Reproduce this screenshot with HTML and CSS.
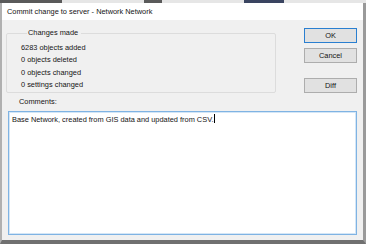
FILE: index.html
```html
<!DOCTYPE html>
<html lang="en">
<head>
  <title>Commit change to server - Network Network</title>
  <meta charset="utf-8">
  <link rel="stylesheet" href="styles.css">
</head>
<body>
  <div class="backdrop">
    <span class="backdrop-dark" style="width: 62px"></span>
    <span class="backdrop-light" style="width: 136px"></span>
    <span class="backdrop-dark" style="width: 18px"></span>
    <span class="backdrop-light" style="width: 14px"></span>
    <span class="backdrop-navy" style="width: 40px"></span>
    <span class="backdrop-light"></span>
  </div>
  <div class="window">
    <div class="titlebar">Commit change to server - Network Network</div>
    <div class="client">
      <div class="top-row">
        <fieldset class="changes">
          <legend class="changes-title">Changes made</legend>
          <div class="change">6283 objects added</div>
          <div class="change">0 objects deleted</div>
          <div class="change">0 objects changed</div>
          <div class="change">0 settings changed</div>
        </fieldset>
        <div class="buttons">
          <button class="button button-default" type="button">OK</button>
          <button class="button" type="button">Cancel</button>
          <button class="button button-diff" type="button">Diff</button>
        </div>
      </div>
      <div class="comments-title">Comments:</div>
      <div class="comments">Base Network, created from GIS data and updated from CSV.<span class="caret"></span></div>
    </div>
  </div>
</body>
</html>
```

FILE: styles.css
```css
*, *::before, *::after {
  margin: 0;
  box-sizing: border-box;
}

body {
  width: 366px;
  height: 244px;
  overflow: hidden;
  background-color: #f0f0f0;
  color: #141414;
  font-family: "Liberation Sans", Arial, sans-serif;
  font-size: 7.4px;
}

.backdrop {
  display: flex;
  height: 3px;
}

.backdrop-dark {
  background-color: #5a5a5a;
}

.backdrop-light {
  flex: 1;
  background-color: #e6e6e6;
}

.backdrop-dark, .backdrop-navy {
  flex: none;
}

.backdrop-navy {
  background-color: #3a4460;
}

.window {
  display: flex;
  flex-direction: column;
  height: 241px;
  border-left: 2px solid #b0b0b0;
  border-right: 3px solid #9a9a9a;
  border-bottom: 4px solid #707070;
}

.titlebar {
  height: 17px;
  padding-left: 5px;
  background-color: #ffffff;
  line-height: 17px;
}

.client {
  flex: 1;
  padding: 8px 6px 0 4px;
  background-color: #f0f0f0;
}

.top-row {
  display: flex;
  justify-content: space-between;
}

.changes {
  width: 270px;
  height: 65px;
  padding: 4px 0 0 14px;
  border: 1px solid #dcdcdc;
  border-radius: 2px;
}

.changes-title {
  margin-left: 6px;
  padding: 0 3px 0 1px;
  line-height: 10px;
}

.change {
  line-height: 12.3px;
}

.buttons {
  display: flex;
  flex-direction: column;
  width: 53px;
}

.button {
  height: 15px;
  padding: 0;
  border: 1px solid #adadad;
  background-color: #e1e1e1;
  color: #141414;
  font-family: inherit;
  font-size: inherit;
}

.button + .button {
  margin-top: 5px;
}

.button-default {
  border-color: #2a7fd0;
}

.button + .button-diff {
  margin-top: 15px;
}

.comments-title {
  margin-top: 4px;
  padding-left: 13px;
  line-height: 10px;
}

.comments {
  height: 124px;
  margin: 4px 0 0 2px;
  padding: 2px 3px;
  border: 1px solid #7fb3e3;
  box-shadow: inset 0 0 0 1px #d4e6f6;
  background-color: #ffffff;
  line-height: 10px;
}

.caret {
  display: inline-block;
  width: 1px;
  height: 9px;
  margin-left: 1px;
  vertical-align: -1px;
  background-color: #000000;
}
```
